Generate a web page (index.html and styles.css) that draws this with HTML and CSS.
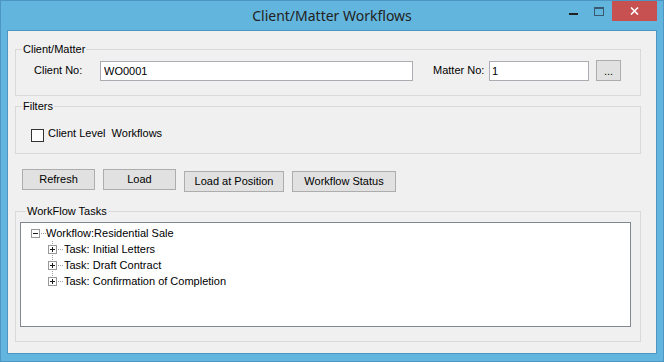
FILE: index.html
```html
<!DOCTYPE html>
<html lang="en">
<head>
    <meta charset="UTF-8">
    <title>Client/Matter Workflows</title>
    <link rel="stylesheet" href="styles.css">
</head>
<body>
    <div class="window">
        <div class="titlebar">
            <div></div>
            <div class="title">Client/Matter Workflows</div>
            <div class="controls">
                <div class="ctl ctl-min"><span class="min-glyph"></span></div>
                <div class="ctl ctl-max"><span class="max-glyph"></span></div>
                <div class="ctl ctl-close">
                    <svg width="9" height="8" viewBox="0 0 9 8"><path d="M1 0.5L8 7.5M8 0.5L1 7.5" stroke="#fff" stroke-width="1.6"/></svg>
                </div>
            </div>
        </div>

        <div class="client">
            <fieldset class="group group-client">
                <legend>Client/Matter</legend>
                <div class="field-row">
                    <label class="lbl lbl-client">Client No:</label>
                    <input type="text" class="txt txt-client" value="WO0001">
                    <label class="lbl lbl-matter">Matter No:</label>
                    <input type="text" class="txt txt-matter" value="1">
                    <button class="btn btn-browse">...</button>
                </div>
            </fieldset>

            <fieldset class="group group-filters">
                <legend>Filters</legend>
                <div class="check-row">
                    <span class="check-box"></span>
                    <span class="check-label">Client Level  Workflows</span>
                </div>
            </fieldset>

            <div class="actions">
                <button class="btn btn-sm">Refresh</button>
                <button class="btn btn-sm">Load</button>
                <button class="btn btn-low btn-pos">Load at Position</button>
                <button class="btn btn-low btn-status">Workflow Status</button>
            </div>

            <fieldset class="group group-tasks">
                <legend>WorkFlow Tasks</legend>
                <div class="tree">
                    <div class="node root">
                        <span class="expander"><svg width="9" height="9" viewBox="0 0 9 9"><rect x="0.5" y="0.5" width="8" height="8" fill="#fff" stroke="#979797"/><path d="M2 4.5h5" stroke="#1a1a1a"/></svg></span>
                        <span class="dots"></span>
                        <span class="node-text">Workflow:Residential Sale</span>
                    </div>
                    <div class="children">
                        <div class="node">
                            <span class="expander"><svg width="9" height="9" viewBox="0 0 9 9"><rect x="0.5" y="0.5" width="8" height="8" fill="#fff" stroke="#979797"/><path d="M2 4.5h5M4.5 2v5" stroke="#1a1a1a"/></svg></span>
                            <span class="dots"></span>
                            <span class="node-text">Task: Initial Letters</span>
                        </div>
                        <div class="node">
                            <span class="expander"><svg width="9" height="9" viewBox="0 0 9 9"><rect x="0.5" y="0.5" width="8" height="8" fill="#fff" stroke="#979797"/><path d="M2 4.5h5M4.5 2v5" stroke="#1a1a1a"/></svg></span>
                            <span class="dots"></span>
                            <span class="node-text">Task: Draft Contract</span>
                        </div>
                        <div class="node">
                            <span class="expander"><svg width="9" height="9" viewBox="0 0 9 9"><rect x="0.5" y="0.5" width="8" height="8" fill="#fff" stroke="#979797"/><path d="M2 4.5h5M4.5 2v5" stroke="#1a1a1a"/></svg></span>
                            <span class="dots"></span>
                            <span class="node-text">Task: Confirmation of Completion</span>
                        </div>
                    </div>
                </div>
            </fieldset>
        </div>
    </div>
</body>
</html>
```

FILE: styles.css
```css
body {
    margin: 0;
    font: 11px "Liberation Sans", Arial, sans-serif;
    color: #000;
}
.window {
    width: 664px;
    height: 362px;
    box-sizing: border-box;
    border: 1px solid #4d96c3;
    background: #62b5dd;
    display: flex;
    flex-direction: column;
}

/* title bar */
.titlebar {
    height: 29px;
    display: grid;
    grid-template-columns: 1fr auto 1fr;
}
.title {
    font: 14px/20px "Noto Sans", "Open Sans", sans-serif;
    color: #222;
    padding-top: 5px;
}
.controls {
    justify-self: end;
    display: flex;
    margin-right: 6px;
    height: 20px;
}
.ctl {
    height: 20px;
    display: flex;
    justify-content: center;
}
.ctl-min,
.ctl-max {
    width: 26px;
}
.min-glyph {
    width: 9px;
    height: 2px;
    margin-top: 12px;
    background: #222;
}
.max-glyph {
    width: 10px;
    height: 9px;
    box-sizing: border-box;
    margin-top: 6px;
    border: 1px solid #3a5870;
    border-top-width: 2px;
}
.ctl-close {
    width: 45px;
    background: #c75050;
    align-items: center;
}

/* client area */
.client {
    flex: 1;
    margin: 0 6px 7px;
    border: 1px solid #4e97c2;
    background: #f0f0f0;
    padding: 12px 15px 11px 7px;
    display: flex;
    flex-direction: column;
}
.group {
    margin: 0;
    min-width: 0;
    border: 1px solid #d9d9d9;
}
.group legend {
    margin-left: 6px;
    padding: 0 1px;
    line-height: 13px;
}
.group-client {
    padding: 4px 0 14px;
}
.group-filters {
    margin-top: 4px;
    padding: 16px 0 11px;
}
.group-tasks {
    margin-top: 13px;
    padding: 4px 9px 14px 4px;
}

.field-row {
    display: flex;
    align-items: flex-start;
    height: 21px;
}
.lbl {
    line-height: 21px;
}
.lbl-client {
    margin-left: 18px;
    width: 66px;
}
.lbl-matter {
    margin-left: 20px;
    width: 56px;
}
.txt {
    height: 20px;
    box-sizing: border-box;
    margin: 1px 0 0;
    border: 1px solid #abadb3;
    padding: 0 2px;
    font: inherit;
    color: #000;
    background: #fff;
    outline: none;
}
.txt-client {
    width: 313px;
    padding-left: 3px;
}
.txt-matter {
    width: 100px;
}

.btn {
    height: 21px;
    box-sizing: border-box;
    border: 1px solid #adadad;
    background: #e1e1e1;
    font: inherit;
    color: #000;
    padding: 0 0 2px;
    margin: 0;
}
.btn-browse {
    margin-left: 7px;
    width: 25px;
    padding: 0;
}

.check-row {
    display: flex;
    margin-left: 15px;
    height: 13px;
}
.check-box {
    width: 13px;
    height: 13px;
    box-sizing: border-box;
    border: 1px solid #333;
    background: #fff;
}
.check-label {
    margin: -2px 0 0 4px;
    line-height: 13px;
    white-space: pre;
}

.actions {
    display: flex;
    align-items: flex-start;
    gap: 8px;
    margin: 15px 0 0 7px;
    height: 23px;
}
.btn-sm {
    width: 73px;
}
.btn-low {
    margin-top: 2px;
}
.btn-pos {
    width: 100px;
}
.btn-status {
    width: 104px;
}

/* tree view */
.tree {
    height: 105px;
    box-sizing: border-box;
    border: 1px solid #828790;
    background: #fff;
    padding-top: 2px;
}
.node {
    display: flex;
    align-items: flex-start;
    height: 16px;
    line-height: 16px;
    white-space: nowrap;
}
.root {
    padding-left: 10px;
}
.children {
    background: repeating-linear-gradient(to bottom, #a0a0a0 0 1px, transparent 1px 2px) 31px 0 / 1px calc(100% - 12px) no-repeat;
}
.children .node {
    padding-left: 27px;
}
.expander {
    display: flex;
    margin-top: 4px;
}
.dots {
    width: 6px;
    height: 1px;
    margin-top: 8px;
    background: repeating-linear-gradient(to right, transparent 0 1px, #a0a0a0 1px 2px);
}
.children .dots {
    margin-right: 1px;
}
```
